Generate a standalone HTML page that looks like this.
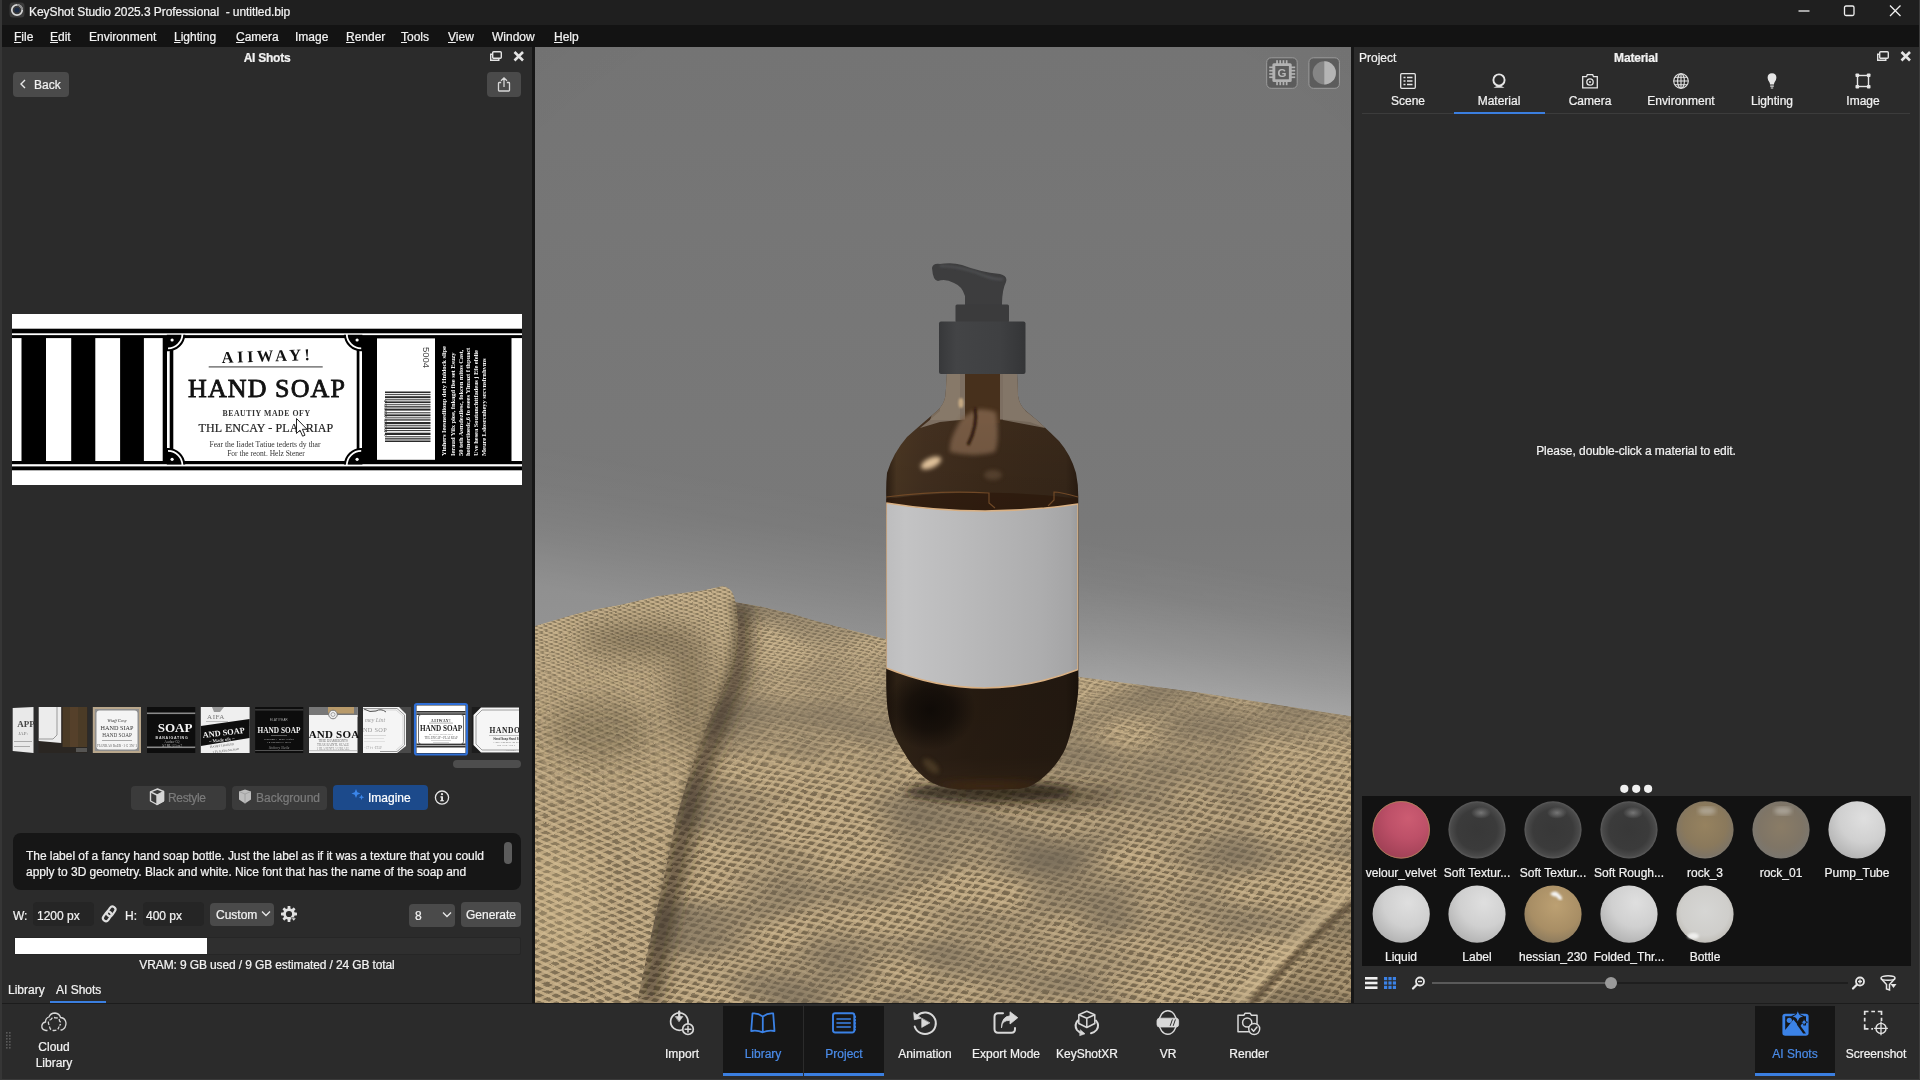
<!DOCTYPE html>
<html lang="en">
<head>
<meta charset="utf-8">
<title>KeyShot Studio 2025.3 Professional - untitled.bip</title>
<style>
*{box-sizing:border-box;margin:0;padding:0}
html,body{width:1920px;height:1080px;overflow:hidden;background:#2b2b2b}
body{position:relative;font-family:"Liberation Sans",sans-serif;font-size:12px;color:#f2f2f2;line-height:14px}
.abs{position:absolute}
.t{position:absolute;white-space:pre;line-height:14px;will-change:transform;-webkit-text-stroke:.22px}
svg.abs{will-change:transform}
.c{text-align:center}
u{text-decoration:underline;text-underline-offset:1px}
#titlebar{left:0;top:0;width:1920px;height:25px;background:#1f1f1f}
#menubar{left:0;top:25px;width:1920px;height:22px;background:#131313}
#leftpanel{left:0;top:47px;width:533px;height:956px;background:#2b2b2b}
#divL{left:532px;top:47px;width:3px;height:956px;background:#161616}
#viewport{left:535px;top:47px;width:817px;height:956px;background:#808080;overflow:hidden}
#divR{left:1351px;top:47px;width:3px;height:956px;background:#161616}
#rightpanel{left:1354px;top:47px;width:566px;height:956px;background:#2b2b2b}
#bottombar{left:0;top:1003px;width:1920px;height:77px;background:#2b2b2b;border-top:1px solid #1c1c1c}
.btn{position:absolute;background:#4a4a4a;border-radius:4px}
</style>
</head>
<body>
<div id="titlebar" class="abs"></div>
<div id="menubar" class="abs"></div>
<div id="leftpanel" class="abs"></div>
<div id="viewport" class="abs"></div>
<!--VPSTART-->
<svg class="abs" style="left:535px;top:47px" width="817" height="956" viewBox="535 47 817 956">
<defs>
<linearGradient id="bgv" x1="0" y1="47" x2="0" y2="730" gradientUnits="userSpaceOnUse">
<stop offset="0" stop-color="#747474"/><stop offset="0.4" stop-color="#777777"/><stop offset="0.7" stop-color="#797979"/><stop offset="1" stop-color="#868686"/>
</linearGradient>
<linearGradient id="bgh" x1="1100" y1="686" x2="1125" y2="546" gradientUnits="userSpaceOnUse">
<stop offset="0" stop-color="#fff" stop-opacity=".30"/><stop offset="0.35" stop-color="#fff" stop-opacity=".15"/><stop offset="0.7" stop-color="#fff" stop-opacity=".04"/><stop offset="1" stop-color="#fff" stop-opacity="0"/>
</linearGradient>
<linearGradient id="hzmg" x1="535" y1="0" x2="1352" y2="0" gradientUnits="userSpaceOnUse"><stop offset="0" stop-color="#fff" stop-opacity=".5"/><stop offset=".45" stop-color="#fff" stop-opacity=".5"/><stop offset=".7" stop-color="#fff" stop-opacity=".9"/><stop offset="1" stop-color="#fff" stop-opacity="1"/></linearGradient>
<mask id="hzm" maskUnits="userSpaceOnUse" x="535" y="47" width="817" height="956"><rect x="535" y="47" width="817" height="956" fill="url(#hzmg)"/></mask>
<radialGradient id="vig" cx="943" cy="560" r="760" gradientUnits="userSpaceOnUse">
<stop offset="0.75" stop-color="#000" stop-opacity="0"/><stop offset="1" stop-color="#000" stop-opacity=".04"/>
</radialGradient>
<pattern id="weaveA" width="10" height="10" patternUnits="userSpaceOnUse" patternTransform="matrix(.95 .21 -.52 .52 0 0)">
<rect width="10" height="10" fill="#7a6a50"/>
<rect width="10" height="4.200" fill="#c0a982"/>
<rect width="4" height="10" fill="#b6a07b"/>
<rect width="4" height="4.200" fill="#c7b18b"/>
</pattern>
<pattern id="weaveA2" width="10" height="10" patternUnits="userSpaceOnUse" patternTransform="matrix(.66 .15 -.3 .27 0 0)">
<rect width="10" height="10" fill="#8b7b5f"/>
<rect width="10" height="4.200" fill="#c6b08a"/>
<rect width="4" height="10" fill="#bca783"/>
<rect width="4" height="4.200" fill="#ccb791"/>
</pattern>
<linearGradient id="nearfar" x1="0" y1="640" x2="0" y2="800" gradientUnits="userSpaceOnUse"><stop offset="0" stop-color="#fff" stop-opacity="0"/><stop offset="1" stop-color="#fff" stop-opacity="1"/></linearGradient>
<mask id="nearmask" maskUnits="userSpaceOnUse" x="525" y="570" width="837" height="443"><rect x="525" y="570" width="837" height="443" fill="url(#nearfar)"/></mask>
<pattern id="weaveB" width="10" height="10" patternUnits="userSpaceOnUse" patternTransform="matrix(.9 .42 .85 -.36 0 0)">
<rect width="10" height="10" fill="#7e6e53"/>
<rect width="10" height="4.200" fill="#c0a982"/>
<rect width="4" height="10" fill="#b6a07b"/>
<rect width="4" height="4.200" fill="#c7b18b"/>
</pattern>
<pattern id="weaveB2" width="10" height="10" patternUnits="userSpaceOnUse" patternTransform="matrix(.5 .2 .46 -.2 0 0)">
<rect width="10" height="10" fill="#8b7b5f"/>
<rect width="10" height="4.200" fill="#c6b08a"/>
<rect width="4" height="10" fill="#bca783"/>
<rect width="4" height="4.200" fill="#ccb791"/>
</pattern>
<linearGradient id="nearfarB" x1="0" y1="620" x2="0" y2="860" gradientUnits="userSpaceOnUse"><stop offset="0" stop-color="#fff" stop-opacity="0"/><stop offset="1" stop-color="#fff" stop-opacity="1"/></linearGradient>
<mask id="nearmaskB" maskUnits="userSpaceOnUse" x="525" y="570" width="240" height="443"><rect x="525" y="570" width="240" height="443" fill="url(#nearfarB)"/></mask>
<filter id="wob" x="0" y="0" width="100%" height="100%" filterUnits="objectBoundingBox"><feTurbulence type="fractalNoise" baseFrequency="0.035 0.05" numOctaves="2" seed="3" result="n"/><feDisplacementMap in="SourceGraphic" in2="n" scale="5" xChannelSelector="R" yChannelSelector="G"/><feGaussianBlur stdDeviation=".45"/></filter>
<filter id="blotch" x="0" y="0" width="100%" height="100%"><feTurbulence type="fractalNoise" baseFrequency="0.008 0.016" numOctaves="2" seed="11"/><feColorMatrix type="matrix" values="0 0 0 0 0.16  0 0 0 0 0.13  0 0 0 0 0.09  2.200 0 0 0 -0.850"/></filter>
<radialGradient id="darkpatch"><stop offset="0" stop-color="#050302" stop-opacity=".7"/><stop offset=".5" stop-color="#050302" stop-opacity=".5"/><stop offset="1" stop-color="#050302" stop-opacity="0"/></radialGradient>
<filter id="b4" x="-60%" y="-60%" width="220%" height="220%"><feGaussianBlur stdDeviation="4"/></filter>
<filter id="b8" x="-60%" y="-60%" width="220%" height="220%"><feGaussianBlur stdDeviation="8"/></filter>
<filter id="b14" x="-60%" y="-60%" width="220%" height="220%"><feGaussianBlur stdDeviation="14"/></filter>
<filter id="b25" x="-60%" y="-60%" width="220%" height="220%"><feGaussianBlur stdDeviation="25"/></filter>
<filter id="b2" x="-60%" y="-60%" width="220%" height="220%"><feGaussianBlur stdDeviation="2"/></filter>
<filter id="b1" x="-60%" y="-60%" width="220%" height="220%"><feGaussianBlur stdDeviation="1"/></filter>
<clipPath id="flatclip"><path id="flatp" d="M700 596 L737 602.500 Q775 608 812 620 Q850 630 883 638.500 Q980 662 1076 676.500 L1200 692.700 L1352 716.500 V1003 H535 V640 Z"/></clipPath>
<clipPath id="foldclip"><path id="foldp" d="M535 626 L576 614 Q600 608 620 605 L657 596.300 L703 590.400 Q716 587.500 722 586.300 Q729 586 733 594 Q737 603 738 625 Q738 648 730 670 Q716 705 703 735 Q688 775 676 820 Q664 880 650 940 L637 1003 H535 Z"/></clipPath>
<linearGradient id="glassH" x1="885" y1="0" x2="1079" y2="0" gradientUnits="userSpaceOnUse">
<stop offset="0" stop-color="#2a1c11"/><stop offset="0.06" stop-color="#4a3622"/><stop offset="0.2" stop-color="#433020"/><stop offset="0.5" stop-color="#3d2b1b"/><stop offset="0.93" stop-color="#38281a"/><stop offset="1" stop-color="#2a1c11"/>
</linearGradient>
<linearGradient id="glassV" x1="0" y1="420" x2="0" y2="795" gradientUnits="userSpaceOnUse">
<stop offset="0" stop-color="#000" stop-opacity="0"/><stop offset="0.2" stop-color="#000" stop-opacity=".08"/><stop offset="0.7" stop-color="#000" stop-opacity=".4"/><stop offset="0.9" stop-color="#000" stop-opacity=".38"/><stop offset="1" stop-color="#000" stop-opacity="0.22"/>
</linearGradient>
<linearGradient id="labelH" x1="886" y1="0" x2="1078" y2="0" gradientUnits="userSpaceOnUse">
<stop offset="0" stop-color="#bdbdbe"/><stop offset="0.1" stop-color="#c3c3c4"/><stop offset="0.3" stop-color="#bdbdbe"/><stop offset="0.55" stop-color="#b5b5b6"/><stop offset="0.8" stop-color="#adadae"/><stop offset="0.96" stop-color="#a5a5a6"/><stop offset="1" stop-color="#9b9b9c"/>
</linearGradient>
<linearGradient id="capH" x1="939" y1="0" x2="1026" y2="0" gradientUnits="userSpaceOnUse">
<stop offset="0" stop-color="#37383a"/><stop offset="0.2" stop-color="#434446"/><stop offset="0.7" stop-color="#3f4042"/><stop offset="1" stop-color="#343537"/>
</linearGradient>
<clipPath id="bottleclip"><path d="M947 373 L945.500 396 Q944 405 937 411 Q925 421 907 437 Q893 453 887 473 Q885.800 485 886.300 499 L886.3 670.0 C886.3 678.3 886.2 683.7 886.4 690.0 C886.6 696.3 886.8 702.3 887.5 708.0 C888.2 713.7 889.1 719.0 890.5 724.0 C891.9 729.0 893.6 733.4 895.8 738.0 C898.0 742.6 900.5 746.9 903.5 751.7 C906.5 756.5 909.8 762.2 914.0 767.0 C918.2 771.8 923.5 777.2 928.5 780.5 C933.5 783.8 938.8 785.5 944.0 787.0 C949.2 788.5 953.3 788.9 960.0 789.3 C966.7 789.7 976.0 789.6 984.0 789.6 C992.0 789.6 1000.4 789.8 1008.0 789.3 C1015.6 788.8 1022.9 789.2 1029.7 786.3 C1036.5 783.4 1043.4 777.6 1049.0 772.0 C1054.6 766.4 1059.7 759.4 1063.4 752.6 C1067.1 745.8 1068.9 738.4 1071.0 731.0 C1073.1 723.6 1074.8 714.8 1076.0 708.0 C1077.2 701.2 1077.8 696.3 1078.2 690.0 C1078.6 683.7 1078.3 678.3 1078.3 670.0 L1078.300 499 Q1078.500 485 1076 473 Q1071 455 1059 441 Q1042 424 1026 411 Q1019 405 1018 396 L1017 373 Z"/></clipPath>
</defs>
<!-- background -->
<rect x="535" y="47" width="817" height="956" fill="url(#bgv)"/>
<rect x="535" y="47" width="817" height="956" fill="url(#bgh)" mask="url(#hzm)"/>
<rect x="535" y="47" width="817" height="956" fill="url(#vig)"/>
<!-- flat cloth -->
<g clip-path="url(#flatclip)">
<g filter="url(#wob)"><rect x="525" y="570" width="837" height="443" fill="url(#weaveA2)"/>
<rect x="525" y="570" width="837" height="443" fill="url(#weaveA)" mask="url(#nearmask)"/></g>
<!-- blotches -->
<rect x="535" y="580" width="817" height="423" filter="url(#blotch)" opacity=".8"/>
<!-- shadow under fold -->
<path d="M738 606 Q748 645 732 690 Q704 755 690 805 Q672 880 648 1003" stroke="#2a2216" stroke-width="20" fill="none" filter="url(#b8)" opacity=".6"/>
<!-- bottle contact shadow -->
<ellipse cx="990" cy="792" rx="85" ry="10" fill="#1e160c" filter="url(#b4)" opacity=".7"/>
<ellipse cx="1040" cy="796" rx="80" ry="10" fill="#2a2012" filter="url(#b8)" opacity=".4"/>
<!-- bottom-right fold -->
<path d="M1352 888 Q1300 935 1236 1003" stroke="#d8c197" stroke-width="13" fill="none" opacity=".38" filter="url(#b2)"/>
<path d="M1353 902 Q1305 945 1250 1004" stroke="#3f3322" stroke-width="5" fill="none" opacity=".8" filter="url(#b2)"/>
<path d="M1353 910 Q1310 950 1262 1004 H1353 Z" fill="#3c3020" opacity=".18"/>
</g>
<!-- folded cloth -->
<g clip-path="url(#foldclip)">
<g filter="url(#wob)"><rect x="525" y="570" width="240" height="443" fill="url(#weaveB2)"/><rect x="525" y="570" width="240" height="443" fill="url(#weaveB)" mask="url(#nearmaskB)"/></g>
<g filter="url(#b14)" opacity=".5">
<ellipse cx="640" cy="640" rx="60" ry="14" fill="#4a3f2d"/>
<ellipse cx="600" cy="730" rx="50" ry="30" fill="#4a3f2d" opacity=".6"/>
<ellipse cx="690" cy="690" rx="22" ry="60" fill="#4a3f2d" opacity=".7"/>
<ellipse cx="560" cy="900" rx="40" ry="60" fill="#e2c99a" opacity=".5"/>
</g>
<path d="M736 600 Q742 640 728 680 Q704 745 690 790 Q676 850 660 920" stroke="#332a1c" stroke-width="9" fill="none" filter="url(#b4)" opacity=".5"/>
</g>
<!-- bottle -->
<g clip-path="url(#bottleclip)">
<rect x="880" y="370" width="205" height="430" fill="url(#glassH)"/>
<!-- transparent upper glass -->
<path d="M940 370 H1025 V411 Q1040 422 1046 428 L1030 422 Q985 416 940 422 L920 428 Q930 420 940 411 Z" fill="#7d6f62"/>
<path d="M947 373 H960 V420 H930 Z" fill="#8a7c6c" opacity=".8"/>
<path d="M1003 373 H1017 L1020 400 L1045 428 L1003 420 Z" fill="#85786a" opacity=".8"/>
<!-- inner tube -->
<rect x="965" y="373" width="35" height="50" fill="#47301c"/>
<path d="M962 418 Q948 440 950 452 Q975 458 995 452 Q1000 440 996 412 Q985 408 975 410 Z" fill="#7d6048" opacity=".9" filter="url(#b2)"/>
<path d="M975 408 Q978 425 968 445" stroke="#2c1808" stroke-width="3" fill="none" filter="url(#b1)"/>
<!-- highlights -->
<ellipse cx="931" cy="463" rx="11" ry="5" transform="rotate(-25 931 463)" fill="#e9c9a0" filter="url(#b2)"/>
<ellipse cx="993" cy="475" rx="9" ry="5" fill="#66503a" filter="url(#b2)" opacity=".7"/>
<ellipse cx="961" cy="403" rx="2.5" ry="5" fill="#d9b98c" filter="url(#b1)" opacity=".8"/>
<!-- inner liquid top ellipse -->
<path d="M886 499 Q982 486 1078 499 V515 H886 Z" fill="#2f1a0b" opacity=".7"/>
<path d="M886 497 Q940 490 989 493 V503 L995 508 M1078 497 Q1060 492 1054 492 V500 L1048 506" stroke="#7a4f2a" stroke-width="1.2" fill="none"/>
<rect x="880" y="370" width="205" height="430" fill="url(#glassV)"/>
<!-- bottom reflections -->
<ellipse cx="931" cy="766" rx="10" ry="4.500" transform="rotate(42 931 766)" fill="#4e3c28" filter="url(#b2)" opacity=".85"/>
<ellipse cx="990" cy="786" rx="50" ry="5" fill="#4a2f19" filter="url(#b4)" opacity=".6"/>
<ellipse cx="930" cy="710" rx="46" ry="40" fill="url(#darkpatch)"/>
<!-- label -->
<path d="M886.300 503 Q982 518.500 1078 504 V669.500 Q982 707 886.300 668 Z" fill="url(#labelH)" stroke="#d9b083" stroke-width="1.500"/>
</g>
<!-- cap -->
<path d="M932 268 Q933 263 940 264 Q952 262 962 265 Q980 272 1000 274 Q1008 276 1006 282 Q1002 290 1002 305 H965 V296 Q962 286 954 283 Q945 278 938 281 Q933 281 932 268 Z" fill="#3d3d3e"/>
<path d="M940 266 Q962 266 985 276 Q996 280 1003 279" stroke="#505153" stroke-width="2" fill="none" filter="url(#b1)"/>
<rect x="955.5" y="304.5" width="53.5" height="18" rx="1.5" fill="#3b3b3c"/>
<rect x="939" y="321.5" width="86.5" height="52.5" rx="2" fill="url(#capH)"/>
</svg>
<!--VPEND-->
<!--VPICONS-->
<svg class="abs" style="left:1262px;top:54px" width="84" height="40" viewBox="1262 54 84 40">
<rect x="1266.700" y="57.800" width="30.500" height="30.500" rx="4.500" fill="#5c5c5c" stroke="#9c9c9c" stroke-width="1"/>
<rect x="1308.900" y="57.800" width="30.500" height="30.500" rx="4.500" fill="#5c5c5c" stroke="#9c9c9c" stroke-width="1"/>
<g fill="#b2b2b2"><rect x="1272.400" y="63.200" width="19.300" height="18.800" rx="1.500"/>
<g id="pin"><rect x="1276.200" y="60.200" width="1.700" height="25"/><rect x="1279.400" y="60.200" width="1.700" height="25"/><rect x="1282.600" y="60.200" width="1.700" height="25"/><rect x="1285.800" y="60.200" width="1.700" height="25"/></g>
<rect x="1269.200" y="66.500" width="26" height="1.700"/><rect x="1269.200" y="69.800" width="26" height="1.700"/><rect x="1269.200" y="73.100" width="26" height="1.700"/><rect x="1269.200" y="76.400" width="26" height="1.700"/></g>
<rect x="1275.300" y="66" width="13.600" height="13.300" fill="#5c5c5c"/>
<text x="1282.100" y="77.400" font-family="Liberation Sans, sans-serif" font-size="11.500" font-weight="bold" text-anchor="middle" fill="#b8b8b8">G</text>
<circle cx="1324.300" cy="72.900" r="11.600" fill="#858585"/><path d="M1324.300 61.300A11.600 11.600 0 0 1 1324.300 84.500Z" fill="#b4b4b4"/>
</svg>
<!--VPICONSEND-->
<div id="divL" class="abs"></div>
<div id="divR" class="abs"></div>
<div id="rightpanel" class="abs"></div>
<div id="bottombar" class="abs"></div>

<!-- TITLEBAR -->
<svg class="abs" style="left:9px;top:2px" width="16" height="16" viewBox="0 0 16 16"><rect x=".5" y=".5" width="15" height="15" rx="3.5" fill="#3a3a3a"/><circle cx="8" cy="8" r="5.2" fill="none" stroke="#d8d8d8" stroke-width="1.7"/><circle cx="8" cy="8" r="2.6" fill="#1b2a44"/><path d="M8 2.8A5.2 5.2 0 0 1 13.2 8" stroke="#8a8a8a" stroke-width="1.7" fill="none"/></svg>
<div class="t" style="left:29px;top:5px;font-size:12px;letter-spacing:-.06px">KeyShot Studio 2025.3 Professional  - untitled.bip</div>
<svg class="abs" style="left:1790px;top:0" width="130" height="25" viewBox="0 0 130 25" fill="none" stroke="#f0f0f0" stroke-width="1.3"><path d="M8.5 11H19.5"/><rect x="54.5" y="6" width="9.5" height="9.5" rx="1.5"/><path d="M100 5.5L110.5 16M110.5 5.5L100 16"/></svg>
<!-- MENUBAR -->
<div class="t" style="left:14px;top:30px"><u>F</u>ile</div>
<div class="t" style="left:50px;top:30px"><u>E</u>dit</div>
<div class="t" style="left:89px;top:30px">Environment</div>
<div class="t" style="left:174px;top:30px"><u>L</u>ighting</div>
<div class="t" style="left:236px;top:30px"><u>C</u>amera</div>
<div class="t" style="left:295px;top:30px">Image</div>
<div class="t" style="left:346px;top:30px"><u>R</u>ender</div>
<div class="t" style="left:401px;top:30px"><u>T</u>ools</div>
<div class="t" style="left:448px;top:30px"><u>V</u>iew</div>
<div class="t" style="left:492px;top:30px">Window</div>
<div class="t" style="left:554px;top:30px"><u>H</u>elp</div>
<!-- LEFT -->
<div class="abs" style="left:0;top:0;width:2px;height:1080px;background:#363636"></div>
<div class="t c" style="left:167px;width:200px;top:51px;font-weight:bold;letter-spacing:-.25px">AI Shots</div>
<svg class="abs" style="left:488px;top:49px" width="40" height="16" viewBox="0 0 40 16" fill="none" stroke="#e4e4e4"><rect x="4.7" y="2.7" width="8.6" height="6.6" rx="1" stroke-width="1.4"/><path d="M4.2 5.2H2.7V11.3H10.8V9.8" stroke-width="1.4"/><path d="M26.5 3L35 11.5M35 3L26.5 11.5" stroke-width="2.6"/></svg>
<div class="btn" style="left:13px;top:72px;width:56px;height:25px"></div>
<svg class="abs" style="left:19px;top:79px" width="8" height="10" viewBox="0 0 8 10" fill="none" stroke="#e8e8e8" stroke-width="1.4"><path d="M6 1L2 5L6 9"/></svg>
<div class="t" style="left:34px;top:78px">Back</div>
<div class="btn" style="left:487px;top:72px;width:34px;height:25px"></div>
<svg class="abs" style="left:496px;top:76px" width="16" height="18" viewBox="0 0 16 18" fill="none" stroke="#d8d8d8" stroke-width="1.3"><path d="M5.2 6.5H3.2Q2.5 6.5 2.5 7.2V14.3Q2.5 15 3.2 15H12.8Q13.5 15 13.5 14.3V7.2Q13.5 6.5 12.8 6.5H10.8M8 11V2M5 4.8L8 1.8L11 4.8"/></svg>
<!--LABELIMG-->
<svg class="abs" style="left:12px;top:314px" width="510" height="171" viewBox="12 314 510 171" font-family="Liberation Serif, serif" text-anchor="middle">
<rect x="12" y="314" width="510" height="171" fill="#fff"/>
<rect x="12" y="328.700" width="510" height="141.600" fill="#000"/>
<rect x="12" y="333.300" width="510" height="1.800" fill="#fff"/>
<rect x="12" y="464.200" width="510" height="2.200" fill="#fff"/>
<!-- stripes -->
<g fill="#fff"><rect x="12" y="338.100" width="9.500" height="122.900"/><rect x="46" y="338.100" width="25.200" height="122.900"/><rect x="95.300" y="338.100" width="24.800" height="122.900"/><rect x="143.900" y="338.100" width="18.800" height="122.900"/>
<rect x="167" y="338.100" width="2.700" height="122.900"/><rect x="173.300" y="338.100" width="183.400" height="122.900"/><rect x="359.400" y="338.100" width="2.600" height="122.900"/>
<rect x="377" y="338.400" width="58" height="121.400"/><rect x="511.500" y="338.100" width="10.500" height="122.900"/></g>
<!-- corner ornaments -->
<g id="corn"><path d="M166.800 334.700H185.300A17.300 17.300 0 0 1 168 351.300H166.800Z" fill="#000"/><path d="M182.400 334A14.400 14.400 0 0 1 168 348.400" fill="none" stroke="#fff" stroke-width="1.800"/><circle cx="172.100" cy="340" r="1.600" fill="#fff"/></g>
<use href="#corn" transform="translate(529.200 0) scale(-1 1)"/>
<use href="#corn" transform="translate(0 799.300) scale(1 -1)"/>
<use href="#corn" transform="translate(529.200 799.300) scale(-1 -1)"/>
<!-- centre text -->
<g fill="#111">
<text x="267.500" y="361.500" font-size="16.500" font-weight="bold" letter-spacing="3.500" transform="rotate(-2 266 356)">AIIWAY!</text>
<rect x="208.700" y="366.300" width="114" height="1.200" fill="#555"/>
<text x="267" y="397" font-size="26" letter-spacing="1.100" stroke="#111" stroke-width=".800">HAND SOAP</text>
<text x="266.500" y="415.800" font-size="7.800" font-weight="bold" letter-spacing=".550" fill="#333">BEAUTIY MADE OFY</text>
<text x="266" y="432.300" font-size="12" letter-spacing=".100" fill="#222" stroke="#222" stroke-width=".200">THL ENCAY - PLAI RIAP</text>
<text x="265" y="447.300" font-size="7.700" fill="#333">Fear the Iiadet Tatiue tederts dy thar</text>
<text x="266" y="456" font-size="7.500" fill="#333">For the reont. Helz Stener</text>
</g>
<!-- barcode -->
<text transform="translate(422.500 357.500) rotate(90)" font-family="Liberation Sans, sans-serif" font-size="9.500" fill="#444">5004</text>
<g fill="#2a2a2a">
<rect x="385" y="391.500" width="45.500" height="1.600"/><rect x="385" y="394.200" width="45.500" height=".900"/><rect x="385" y="396.200" width="45.500" height="2"/><rect x="385" y="399.300" width="45.500" height="1"/><rect x="385" y="401.400" width="45.500" height="1.700"/><rect x="385" y="404.300" width="45.500" height=".900"/><rect x="385" y="406.200" width="45.500" height="1.300"/><rect x="385" y="408.600" width="45.500" height="2"/><rect x="385" y="412.300" width="45.500" height="1"/><rect x="385" y="414.400" width="45.500" height="1.800"/><rect x="385" y="417.400" width="45.500" height=".900"/><rect x="385" y="419.300" width="45.500" height="1.300"/><rect x="385" y="422" width="45.500" height="2.200"/><rect x="385" y="425.300" width="45.500" height="1"/><rect x="385" y="427.400" width="45.500" height="1.600"/><rect x="385" y="430.100" width="45.500" height="1"/><rect x="385" y="432.700" width="45.500" height="2.300"/><rect x="385" y="436.300" width="45.500" height="1"/><rect x="385" y="438.200" width="45.500" height="1.300"/><rect x="385" y="440.500" width="45.500" height="1.500"/></g>
<text transform="translate(384.300 418) rotate(90)" font-family="Liberation Sans, sans-serif" font-size="3.800" fill="#333" letter-spacing=".200">4 810853 498064 6</text>
<!-- vertical text -->
<g fill="#f2f2f2" font-size="6.600" font-weight="bold" text-anchor="start" letter-spacing="-.100">
<text transform="translate(446.300 456) rotate(-90)">Yinhers Ieesnediionp doty Hnidock slipe</text>
<text transform="translate(454.600 456) rotate(-90)">Ieraud Yilx pioe, fnkagd fise set Esuzy</text>
<text transform="translate(462.500 456) rotate(-90)">50 teth Asmdezilesc, fokcen mitos Cast,</text>
<text transform="translate(470.400 456) rotate(-90)">hotnertioedc,6 fo esees Ylmazt f thpuact</text>
<text transform="translate(478.400 456) rotate(-90)">Uve hesea Soutanchttfadeas j Efe efelie</text>
<text transform="translate(486.300 456) rotate(-90)">Meure Lslosrcnheyy srcvnsfrnhvms</text>
</g>
</svg>
<svg class="abs" style="left:295px;top:417px" width="13" height="21" viewBox="0 0 13 21"><path d="M1.500 1.500V16.500L5 13.200L7.600 19.200L10 18.200L7.400 12.300H12Z" fill="#fff" stroke="#222" stroke-width="1"/></svg>
<!--LABELEND-->
<!--THUMBS-->
<svg class="abs" style="left:12px;top:700px" width="510" height="58" viewBox="12 700 510 58" font-family="Liberation Serif, serif" text-anchor="middle">
<defs><filter id="tb"><feGaussianBlur stdDeviation=".35"/></filter></defs>
<g filter="url(#tb)">
<!-- 1 -->
<path d="M12.700 708L33.500 707V753L12.700 751Z" fill="#e9e9e9"/>
<text x="26" y="727" font-size="9" font-weight="bold" fill="#444">APP</text><text x="23" y="735" font-size="5" fill="#777">JAP:</text><rect x="14" y="741" width="18" height="1" fill="#aaa"/><rect x="14" y="746" width="16" height="1" fill="#aaa"/>
<!-- 2 -->
<rect x="38.700" y="707" width="48.500" height="46" fill="#2a2520"/>
<rect x="62.600" y="707" width="24.600" height="40" fill="#4c3a28"/><rect x="70" y="707" width="8" height="40" fill="#5a452e" opacity=".7"/>
<path d="M38.700 707H61.200V743L38.700 741Z" fill="#ececec"/><path d="M57 707V735L53 739H38.700" stroke="#999" stroke-width="1" fill="none"/>
<rect x="76" y="748" width="11" height="4" fill="#777" opacity=".6"/>
<!-- 3 -->
<rect x="92.800" y="707" width="48.200" height="46" fill="#b9a78c"/><rect x="94.800" y="709" width="44.200" height="42" fill="#8f8f8f"/><rect x="96.500" y="710.500" width="41" height="39" rx="3" fill="#f4f4f4"/>
<text x="117" y="722" font-size="4.500" font-style="italic" fill="#333">Wiaff Cosy</text><text x="117" y="730" font-size="6.200" fill="#333">HAND SIAP</text><text x="117" y="736.500" font-size="5.200" fill="#444">HAND SOAP</text><rect x="102" y="740" width="30" height=".800" fill="#999"/><text x="117" y="746.500" font-size="3.500" fill="#666">FIANRAS RaER ·1 G 3N/ 1</text>
<!-- 4 -->
<rect x="147" y="707" width="48.200" height="46" fill="#0c0c0c"/><rect x="147" y="712.500" width="48.200" height="1.600" fill="#8a8a8a"/><rect x="147" y="746.500" width="48.200" height="1.600" fill="#8a8a8a"/>
<text x="175" y="731.500" font-size="13" font-weight="bold" fill="#f6f6f6">SOAP</text><text x="172" y="739.200" font-family="Liberation Sans, sans-serif" font-size="3.600" font-weight="bold" letter-spacing=".700" fill="#ddd">BANAIGATING</text><text x="172" y="743" font-size="3" fill="#bbb">Aeedaer CQ</text><text x="172" y="746.500" font-size="3" fill="#bbb">5t7 ML  |  2.5 oz7</text>
<!-- 5 -->
<rect x="200.800" y="707" width="48.800" height="46" fill="#efefef"/><path d="M200.800 726L249.600 719V738L200.800 746Z" fill="#0e0e0e"/><path d="M212 707H224L220 712H214Z" fill="#999"/>
<text x="216" y="718.500" font-size="7" fill="#777" letter-spacing=".500">AIFA</text><rect x="206" y="721" width="22" height=".600" fill="#999"/>
<text x="224" y="735.500" font-size="8.300" font-weight="bold" fill="#f4f4f4" transform="rotate(-7 224 735)">AND SOAP</text><text x="222" y="741.500" font-size="4.600" font-weight="bold" fill="#ddd" transform="rotate(-7 222 741)">~ Made ofy ~</text>
<text x="222" y="746.500" font-size="3" fill="#555" transform="rotate(-7 222 746)">FIANET LHAIUER</text><text x="226" y="751.500" font-size="3" fill="#555" transform="rotate(-7 226 751)">1 FL ICERS MCNAR</text>
<!-- 6 -->
<rect x="255.100" y="707" width="48.100" height="46" fill="#0a0a0a"/><rect x="255.100" y="709.500" width="48.100" height=".800" fill="#666"/><rect x="255.100" y="750" width="48.100" height=".800" fill="#666"/>
<text x="279" y="721" font-family="Liberation Sans, sans-serif" font-size="2.800" fill="#bbb" letter-spacing=".300">ELATIYEAR</text><text x="279" y="732.500" font-size="7.300" font-weight="bold" fill="#f2f2f2">HAND SOAP</text><rect x="271" y="735.500" width="16" height=".500" fill="#aaa"/><text x="279" y="739.500" font-size="2.800" fill="#bbb">Fragitannel  ·  Marle it ofaly</text><text x="279" y="743" font-size="2.800" fill="#bbb">Th zlan  hoelil l vailly</text><text x="279" y="749" font-size="3.600" font-style="italic" fill="#999">Stoltory Slaile</text>
<!-- 7 -->
<rect x="309" y="707" width="48.500" height="46" fill="#f3f3f3"/><rect x="309" y="707" width="48.500" height="8" fill="#777"/><rect x="328" y="707" width="26" height="6.500" fill="#b89a6a"/><path d="M309 715H326Q333 722 340 715H357.500V717H309Z" fill="#f3f3f3"/><circle cx="333" cy="714.500" r="4.300" fill="#eee" stroke="#666" stroke-width=".800"/><circle cx="333" cy="714.500" r="2" fill="none" stroke="#777" stroke-width=".600"/>
<text x="334" y="737.500" font-size="11" font-weight="bold" fill="#111" letter-spacing=".200">AND SOA</text><text x="333" y="742.200" font-size="3.200" fill="#666">THEE DIAMEEONTS</text><text x="333" y="746" font-size="3.200" fill="#777">THAR BAINTL  SEAGE</text><text x="333" y="749.600" font-size="3" fill="#888">1 HLA  9ENTL 5 UBLALL</text><rect x="309" y="750.500" width="48.500" height=".600" fill="#999"/>
<!-- 8 -->
<rect x="363" y="707" width="48" height="46" fill="#f5f5f5"/><path d="M399 707H411V753H397L406 746V714Z" fill="#4a4a4a"/><path d="M363 708.500H397L404.500 715V745L397 751.500H380" fill="none" stroke="#999" stroke-width="1"/><path d="M363 710H396L403 716V744L396 750" fill="none" stroke="#ccc" stroke-width=".700"/>
<path d="M364 709Q370 713 376 711Q381 708 386 712" stroke="#555" stroke-width="1" fill="none"/>
<text x="375" y="722" font-size="5.800" font-style="italic" fill="#999">mey Lint</text><text x="375" y="731.500" font-size="6.300" fill="#999" letter-spacing=".300">ND SOP</text><rect x="364" y="735" width="22" height=".500" fill="#bbb"/><rect x="364" y="738" width="20" height=".500" fill="#ccc"/><rect x="364" y="741" width="21" height=".500" fill="#ccc"/><text x="373" y="748.500" font-size="3" fill="#999">· C7  f·t  ·ETAP</text>
<!-- 9 selected -->
<rect x="416.500" y="705.500" width="49" height="47.500" fill="#fff"/><rect x="416.500" y="711" width="49" height="4" fill="#333"/><rect x="416.500" y="743.500" width="49" height="4" fill="#333"/><rect x="416.500" y="712.600" width="49" height=".700" fill="#ddd"/><rect x="416.500" y="745.100" width="49" height=".700" fill="#ddd"/><rect x="418.500" y="714.500" width="45" height="29.500" rx="2.500" fill="#fff" stroke="#444" stroke-width=".800"/>
<text x="441" y="721.500" font-size="4" font-weight="bold" letter-spacing=".600" fill="#333">AIIWAY!</text><rect x="429" y="722.800" width="24" height=".500" fill="#666"/><text x="441" y="731.200" font-size="7.200" font-weight="bold" fill="#1a1a1a">HAND SOAP</text><text x="441" y="735" font-size="2.500" fill="#666">BEAUTIY MADE OFY</text><text x="441" y="738.500" font-size="3" fill="#555">THL ENCAY - PLAI RIAP</text><rect x="431" y="740.500" width="20" height=".400" fill="#999"/><rect x="433" y="742" width="16" height=".400" fill="#999"/>
<!-- 10 -->
<rect x="471.700" y="707" width="47.300" height="46" fill="#1c1c1c"/><path d="M519 707.500H481L473.500 715V745L481 752.500H519Z" fill="#f6f6f6"/><path d="M519 710H482L476 716V744L482 750H519" fill="none" stroke="#888" stroke-width=".800"/>
<text x="505" y="733" font-size="7.500" font-weight="bold" fill="#222" letter-spacing=".600">HANDO</text><rect x="489" y="735.500" width="30" height=".500" fill="#888"/><text x="506" y="739.500" font-family="Liberation Sans, sans-serif" font-size="2.800" font-weight="bold" fill="#444">Hand Soap Hand S</text><text x="506" y="743" font-size="2.600" fill="#777">Land Feagenaese ant ha</text><text x="506" y="746.200" font-size="2.600" fill="#777">Nart HLar Actit P</text><text x="510" y="750.500" font-size="2.600" fill="#888">. Aer raahl I</text>
</g>
<rect x="415" y="704" width="52" height="50.500" rx="2" fill="none" stroke="#2f6fd6" stroke-width="2.200"/>
</svg>
<!--THUMBSEND-->
<div class="abs" style="left:453px;top:760px;width:68px;height:8px;border-radius:4px;background:#4d4d4d"></div>
<!-- mode buttons -->
<div class="btn" style="left:131px;top:786px;width:95px;height:24px;background:#3b3b3b"></div>
<svg class="abs" style="left:149px;top:787px" width="16" height="20" viewBox="0 0 16 20" fill="none" stroke="#d6d6d6" stroke-width="1.400" stroke-linejoin="round"><path d="M1.500 4.800L8.500 2L14.500 4.500V13.800L8 17.500L1.500 14Z"/><path d="M8 8V17.500L14.500 13.800V4.500Z" fill="#d6d6d6"/><path d="M1.500 4.800L8 8" /></svg>
<div class="t" style="left:168px;top:791px;color:#7b7b7b;letter-spacing:-.35px">Restyle</div>
<div class="btn" style="left:232px;top:786px;width:95px;height:24px;background:#3b3b3b"></div>
<svg class="abs" style="left:237px;top:788px" width="16" height="18" viewBox="0 0 16 18"><path d="M2 3.5L8 1.5L14 3.5V11.5L8 15.5L2 11.5Z" fill="#bdbdbd"/><path d="M2 3.5L8 6L14 3.5M8 6V15.5" stroke="#9a9a9a" stroke-width=".8" fill="none"/></svg>
<div class="t" style="left:256px;top:791px;color:#7b7b7b">Background</div>
<div class="btn" style="left:333px;top:785px;width:95px;height:25px;background:#1c4a8b"></div>
<svg class="abs" style="left:351px;top:788px" width="14" height="14" viewBox="0 0 14 14" fill="#3b86ea"><path d="M5 1L6.3 4.2L9.5 5.5L6.3 6.8L5 10L3.7 6.8L.5 5.5L3.7 4.2Z"/><path d="M10.5 6.5L11.3 8.4L13.2 9.2L11.3 10L10.5 11.9L9.7 10L7.8 9.2L9.7 8.4Z"/></svg>
<div class="t" style="left:368px;top:791px;color:#fff">Imagine</div>
<svg class="abs" style="left:433px;top:789px" width="18" height="18" viewBox="0 0 18 18"><circle cx="9" cy="8.6" r="6.6" fill="none" stroke="#e6e6e6" stroke-width="1.3"/><rect x="8.1" y="7.4" width="1.9" height="4.6" fill="#e6e6e6"/><rect x="7.3" y="7.4" width="2" height="1.1" fill="#e6e6e6"/><rect x="7.2" y="11.2" width="3.7" height="1.1" fill="#e6e6e6"/><circle cx="9" cy="5.2" r="1.1" fill="#e6e6e6"/></svg>
<!-- prompt -->
<div class="abs" style="left:13px;top:833px;width:508px;height:57px;border-radius:8px;background:#161616"></div>
<div class="t" style="left:26px;top:848px;line-height:16px;letter-spacing:-.04px">The label of a fancy hand soap bottle. Just the label as if it was a texture that you could
apply to 3D geometry. Black and white. Nice font that has the name of the soap and</div>
<div class="abs" style="left:504px;top:842px;width:8px;height:22px;border-radius:4px;background:#5c5c5c"></div>
<!-- size row -->
<div class="t" style="left:13px;top:909px">W:</div>
<div class="abs" style="left:33px;top:902px;width:61px;height:24px;border-radius:4px;background:#252525"></div>
<div class="t" style="left:37px;top:909px">1200 px</div>
<svg class="abs" style="left:100px;top:903px" width="20" height="22" viewBox="100 903 20 22" fill="none" stroke="#dedede" stroke-width="2.100"><rect x="102" y="913.300" width="10.400" height="6" rx="3" transform="rotate(-55 107.200 916.300)"/><rect x="106" y="908.300" width="10.400" height="6" rx="3" transform="rotate(-55 111.200 911.300)"/></svg>
<div class="t" style="left:125px;top:909px">H:</div>
<div class="abs" style="left:143px;top:902px;width:61px;height:24px;border-radius:4px;background:#252525"></div>
<div class="t" style="left:146px;top:909px">400 px</div>
<div class="btn" style="left:210px;top:903px;width:64px;height:23px"></div>
<div class="t" style="left:216px;top:908px">Custom</div>
<svg class="abs" style="left:261px;top:910px" width="10" height="8" viewBox="0 0 10 8" fill="none" stroke="#e8e8e8" stroke-width="1.3"><path d="M1 1.5L5 5.5L9 1.5"/></svg>
<svg class="abs" style="left:280px;top:905px" width="18" height="18" viewBox="0 0 18 18"><g fill="#e2e2e2"><circle cx="9" cy="9" r="5.800"/><g id="gt"><rect x="7.600" y="1" width="2.800" height="16" rx=".6"/></g><use href="#gt" transform="rotate(45 9 9)"/><use href="#gt" transform="rotate(90 9 9)"/><use href="#gt" transform="rotate(135 9 9)"/></g><circle cx="9" cy="9" r="3.100" fill="#2b2b2b"/><path d="M10.500 12.500H17L13.750 16.500Z" fill="#2b2b2b"/><path d="M11.800 13.300H15.700L13.750 15.700Z" fill="#e2e2e2"/></svg>
<div class="btn" style="left:409px;top:904px;width:46px;height:23px"></div>
<div class="t" style="left:415px;top:909px">8</div>
<svg class="abs" style="left:442px;top:911px" width="10" height="8" viewBox="0 0 10 8" fill="none" stroke="#e8e8e8" stroke-width="1.3"><path d="M1 1.5L5 5.5L9 1.5"/></svg>
<div class="btn" style="left:461px;top:902px;width:60px;height:25px"></div>
<div class="t c" style="left:461px;width:60px;top:908px">Generate</div>
<!-- progress -->
<div class="abs" style="left:14px;top:937px;width:507px;height:18px;border-radius:2px;background:#2f2f2f;border:1px solid #262626"></div>
<div class="abs" style="left:15px;top:938px;width:192px;height:16px;background:#fff"></div>
<div class="t c" style="left:67px;width:400px;top:958px;letter-spacing:-.12px">VRAM: 9 GB used / 9 GB estimated / 24 GB total</div>
<!-- tabs -->
<div class="t" style="left:8px;top:983px">Library</div>
<div class="t" style="left:56px;top:983px">AI Shots</div>
<div class="abs" style="left:50px;top:1001px;width:56px;height:2px;background:#3b7fe0"></div>
<!-- RIGHT -->
<div class="t" style="left:1359px;top:51px">Project</div>
<div class="t c" style="left:1536px;width:200px;top:51px;font-weight:bold;letter-spacing:-.2px">Material</div>
<svg class="abs" style="left:1875px;top:49px" width="40" height="16" viewBox="0 0 40 16" fill="none" stroke="#e4e4e4"><rect x="4.7" y="2.7" width="8.6" height="6.6" rx="1" stroke-width="1.4"/><path d="M4.2 5.2H2.7V11.3H10.8V9.8" stroke-width="1.4"/><path d="M26.5 3L35 11.5M35 3L26.5 11.5" stroke-width="2.6"/></svg>
<!-- tab icons -->
<svg class="abs" style="left:1399px;top:72px" width="18" height="18" viewBox="0 0 18 18" fill="none" stroke="#e6e6e6" stroke-width="1.3"><rect x="1.7" y="1.7" width="14.6" height="14.6" rx="1"/><path d="M4.5 5.5H6.5M8 5.5H13.5M4.5 9H6.5M8 9H13.5M4.5 12.5H6.5M8 12.5H13.5" stroke-width="1.5"/></svg>
<svg class="abs" style="left:1490px;top:72px" width="18" height="18" viewBox="0 0 18 18" fill="none" stroke="#e6e6e6"><circle cx="9" cy="8" r="5.6" stroke-width="1.9"/><path d="M3.5 15.8Q9 11.5 14.5 15.8Z" fill="#e6e6e6" stroke="none"/></svg>
<svg class="abs" style="left:1581px;top:72px" width="18" height="18" viewBox="0 0 18 18" fill="none" stroke="#e6e6e6" stroke-width="1.3"><path d="M1.7 4.7H5.5L6.3 2.7H11.7L12.5 4.7H16.3V15.8H1.7Z"/><circle cx="9" cy="10" r="3.2"/><circle cx="9" cy="10" r="1" fill="#e6e6e6" stroke="none"/></svg>
<svg class="abs" style="left:1672px;top:72px" width="18" height="18" viewBox="0 0 18 18" fill="none" stroke="#e6e6e6" stroke-width="1.1"><circle cx="9" cy="9" r="7.3"/><ellipse cx="9" cy="9" rx="3.4" ry="7.3"/><path d="M9 1.7V16.3M1.7 9H16.3M2.8 5.3H15.2M2.8 12.7H15.2"/></svg>
<svg class="abs" style="left:1763px;top:72px" width="18" height="18" viewBox="0 0 18 18"><path d="M9 1.2Q13.4 1.2 13.4 5.8Q13.4 8 11.6 10.2Q11 11.2 11 12.6H7Q7 11.2 6.4 10.2Q4.6 8 4.6 5.8Q4.600 1.2 9 1.2Z" fill="#e6e6e6"/><path d="M7.2 14.2H10.8M7.8 16H10.2" stroke="#e6e6e6" stroke-width="1.2"/></svg>
<svg class="abs" style="left:1854px;top:72px" width="18" height="18" viewBox="0 0 18 18" fill="none" stroke="#e6e6e6" stroke-width="1.4"><rect x="3.5" y="3.5" width="11" height="11"/><g fill="#e6e6e6" stroke="none"><rect x="1.5" y="1.5" width="3.6" height="3.6" rx=".8"/><rect x="12.9" y="1.5" width="3.6" height="3.6" rx=".8"/><rect x="1.5" y="12.9" width="3.6" height="3.6" rx=".8"/><rect x="12.9" y="12.9" width="3.6" height="3.6" rx=".8"/></g></svg>
<div class="t c" style="left:1358px;width:100px;top:94px">Scene</div>
<div class="t c" style="left:1449px;width:100px;top:94px">Material</div>
<div class="t c" style="left:1540px;width:100px;top:94px">Camera</div>
<div class="t c" style="left:1631px;width:100px;top:94px">Environment</div>
<div class="t c" style="left:1722px;width:100px;top:94px">Lighting</div>
<div class="t c" style="left:1813px;width:100px;top:94px">Image</div>
<div class="abs" style="left:1362px;top:113px;width:548px;height:1px;background:#3c3c3c"></div>
<div class="abs" style="left:1454px;top:112px;width:91px;height:2px;background:#3b7fe0"></div>
<div class="t c" style="left:1486px;width:300px;top:444px;letter-spacing:-.06px">Please, double-click a material to edit.</div>
<svg class="abs" style="left:1616px;top:782px" width="40" height="14" viewBox="0 0 40 14" fill="#f0f0f0"><circle cx="8.3" cy="6.8" r="4.1"/><circle cx="20.2" cy="6.8" r="4.1"/><circle cx="32.1" cy="6.8" r="4.1"/></svg>
<div class="abs" style="left:1362px;top:796px;width:549px;height:170px;background:#121212"></div>
<!--SPHERES-->
<svg class="abs" style="left:1362px;top:796px" width="549" height="170" viewBox="1362 796 549 170">
<defs>
<radialGradient id="velour" cx=".62" cy=".3" r=".8"><stop offset="0" stop-color="#cc5c72"/><stop offset=".45" stop-color="#bd5068"/><stop offset=".8" stop-color="#a7445a"/><stop offset="1" stop-color="#9a3e52"/></radialGradient>
<radialGradient id="dark" cx=".5" cy=".5" r=".5"><stop offset="0" stop-color="#383838"/><stop offset=".7" stop-color="#3b3b3b"/><stop offset=".92" stop-color="#4a4a4a"/><stop offset="1" stop-color="#5c5c5c"/></radialGradient>
<radialGradient id="darkhl" cx=".5" cy=".5" r=".5"><stop offset="0" stop-color="#8a8a8a" stop-opacity=".75"/><stop offset="1" stop-color="#8a8a8a" stop-opacity="0"/></radialGradient>
<radialGradient id="white" cx=".62" cy=".3" r=".85"><stop offset="0" stop-color="#dfdfdf"/><stop offset=".5" stop-color="#d0d0d0"/><stop offset=".85" stop-color="#b4b4b4"/><stop offset="1" stop-color="#a4a4a4"/></radialGradient>
<radialGradient id="bottlew" cx=".5" cy=".45" r=".6"><stop offset="0" stop-color="#d6d6d4"/><stop offset=".7" stop-color="#cfcecb"/><stop offset="1" stop-color="#bcb9b2"/></radialGradient>
<radialGradient id="hess" cx=".55" cy=".35" r=".75"><stop offset="0" stop-color="#bca072"/><stop offset=".6" stop-color="#a88e65"/><stop offset=".9" stop-color="#8b7a5e"/><stop offset="1" stop-color="#8a8378"/></radialGradient>
<radialGradient id="rock3" cx=".5" cy=".42" r=".62"><stop offset="0" stop-color="#96825f"/><stop offset=".6" stop-color="#8a795c"/><stop offset=".88" stop-color="#7d7466"/><stop offset="1" stop-color="#8c8b88"/></radialGradient>
<radialGradient id="rock1" cx=".5" cy=".45" r=".62"><stop offset="0" stop-color="#8a7c66"/><stop offset=".6" stop-color="#7f7566"/><stop offset=".88" stop-color="#7a766f"/><stop offset="1" stop-color="#8c8b88"/></radialGradient>
<filter id="sb"><feGaussianBlur stdDeviation="2.2"/></filter><filter id="sb1"><feGaussianBlur stdDeviation=".8"/></filter>
</defs>
<circle cx="1401.2" cy="829.8" r="28.6" fill="url(#velour)"/><circle cx="1401.2" cy="829.8" r="28.3" fill="none" stroke="#b08a5a" stroke-width=".8"/>
<circle cx="1477" cy="829.8" r="28.6" fill="url(#dark)"/><ellipse cx="1481" cy="812.8" rx="10" ry="6" fill="url(#darkhl)"/>
<circle cx="1553" cy="829.8" r="28.6" fill="url(#dark)"/><ellipse cx="1557" cy="812.8" rx="10" ry="6" fill="url(#darkhl)"/>
<circle cx="1629" cy="829.8" r="28.6" fill="url(#dark)"/><ellipse cx="1633" cy="812.8" rx="10" ry="6" fill="url(#darkhl)"/>
<circle cx="1705" cy="829.8" r="28.6" fill="url(#rock3)"/><ellipse cx="1707" cy="810.8" rx="9" ry="4" fill="#c8c4bc" opacity=".55" filter="url(#sb)"/>
<circle cx="1781" cy="829.8" r="28.6" fill="url(#rock1)"/><ellipse cx="1783" cy="810.8" rx="9" ry="4" fill="#c8c4bc" opacity=".55" filter="url(#sb)"/>
<circle cx="1857" cy="829.8" r="28.6" fill="url(#white)"/>
<circle cx="1401.2" cy="914.1" r="28.6" fill="url(#white)"/>
<circle cx="1477" cy="914.1" r="28.6" fill="url(#white)"/>
<circle cx="1553" cy="914.1" r="28.6" fill="url(#hess)"/><path d="M1550 894.1q3 -4 7 -2q2 2 4 4q2 3 0 4q-3 0 -4 -3q-4 0 -7 -3z" fill="#f4f4f4" filter="url(#sb1)"/>
<circle cx="1629" cy="914.1" r="28.6" fill="url(#white)"/>
<circle cx="1705" cy="914.1" r="28.6" fill="url(#bottlew)"/><ellipse cx="1693" cy="936.1" rx="6" ry="3" fill="#fff" opacity=".7" filter="url(#sb1)"/>
</svg>
<div class="t c" style="left:1351px;width:100px;top:866px">velour_velvet</div>
<div class="t c" style="left:1427px;width:100px;top:866px">Soft Textur...</div>
<div class="t c" style="left:1503px;width:100px;top:866px">Soft Textur...</div>
<div class="t c" style="left:1579px;width:100px;top:866px">Soft Rough...</div>
<div class="t c" style="left:1655px;width:100px;top:866px">rock_3</div>
<div class="t c" style="left:1731px;width:100px;top:866px">rock_01</div>
<div class="t c" style="left:1807px;width:100px;top:866px">Pump_Tube</div>
<div class="t c" style="left:1351px;width:100px;top:950px">Liquid</div>
<div class="t c" style="left:1427px;width:100px;top:950px">Label</div>
<div class="t c" style="left:1503px;width:100px;top:950px">hessian_230</div>
<div class="t c" style="left:1579px;width:100px;top:950px">Folded_Thr...</div>
<div class="t c" style="left:1655px;width:100px;top:950px">Bottle</div>
<!--SPHERESEND-->
<!-- list toolbar -->
<svg class="abs" style="left:1364px;top:975px" width="36" height="16" viewBox="0 0 36 16"><g fill="#f0f0f0"><rect x="1" y="2" width="12.5" height="2.6"/><rect x="1" y="6.7" width="12.5" height="2.6"/><rect x="1" y="11.4" width="12.5" height="2.6"/></g><g fill="#3b82e6"><rect x="20" y="2" width="3.2" height="3.2"/><rect x="24.4" y="2" width="3.2" height="3.2"/><rect x="28.8" y="2" width="3.2" height="3.2"/><rect x="20" y="6.4" width="3.2" height="3.2"/><rect x="24.4" y="6.4" width="3.2" height="3.2"/><rect x="28.8" y="6.4" width="3.2" height="3.2"/><rect x="20" y="10.800" width="3.2" height="3.2"/><rect x="24.4" y="10.8" width="3.2" height="3.2"/><rect x="28.8" y="10.8" width="3.2" height="3.2"/></g></svg>
<svg class="abs" style="left:1411px;top:975px" width="16" height="16" viewBox="0 0 16 16" fill="none" stroke="#e8e8e8"><circle cx="9" cy="6.5" r="4" stroke-width="1.8"/><path d="M6 9.500L2 13.500" stroke-width="2.2" stroke-linecap="round"/><path d="M7 6.5H11" stroke-width="1.4"/></svg>
<div class="abs" style="left:1432px;top:982px;width:180px;height:2px;background:#5a5a5a"></div>
<div class="abs" style="left:1612px;top:982px;width:236px;height:2px;background:#1e1e1e"></div>
<div class="abs" style="left:1605px;top:977px;width:12px;height:12px;border-radius:6px;background:#9a9a9a"></div>
<svg class="abs" style="left:1851px;top:975px" width="16" height="16" viewBox="0 0 16 16" fill="none" stroke="#e8e8e8"><circle cx="9" cy="6.5" r="4" stroke-width="1.8"/><path d="M6 9.500L2 13.500" stroke-width="2.2" stroke-linecap="round"/><path d="M7 6.5H11M9 4.5V8.5" stroke-width="1.4"/></svg>
<svg class="abs" style="left:1879px;top:974px" width="20" height="18" viewBox="0 0 20 18" fill="none" stroke="#e8e8e8" stroke-width="1.5"><ellipse cx="9" cy="4" rx="7" ry="2.300"/><path d="M2 4.500L7.500 10.500V15L10.500 16V10.500L16 4.500"/><path d="M11.500 10H17.500L14.500 14Z" fill="#e8e8e8" stroke="none"/></svg>
<!-- BOTTOM -->
<div class="abs" style="left:1919px;top:0;width:1px;height:1080px;background:#3c3c3c"></div>
<div class="abs" style="left:0;top:1079px;width:1920px;height:1px;background:#3a3a3a"></div>
<svg class="abs" style="left:5px;top:1031px" width="8" height="20" viewBox="0 0 8 20" fill="#5a5a5a"><g id="dd"><rect x="1" y="1" width="1.6" height="1.6"/><rect x="4" y="1" width="1.6" height="1.6"/></g><use href="#dd" y="3"/><use href="#dd" y="6"/><use href="#dd" y="9"/><use href="#dd" y="12"/><use href="#dd" y="15"/></svg>
<svg class="abs" style="left:40px;top:1011px" width="28" height="24" viewBox="0 0 28 24" fill="none" stroke="#d8d8d8" stroke-width="1.3"><path d="M7.500 19.500H6Q1.500 19 1.800 14.800Q2.200 11.500 5.500 11Q5.500 7 9 6Q10.500 2 15 2Q19.500 2.500 20.500 6.500Q25.500 7 26 12Q26 17 22 19H20.500"/><path d="M9 14Q7 10 11 8.500Q12.500 5.500 16 7Q19.500 6.500 19.500 10Q22 12 19.500 14.500" stroke-dasharray="3.500 1.800"/><path d="M9.500 15.500Q10 19.500 14 19.500Q18.500 19.500 19 15.500" stroke-dasharray="3.500 1.800"/></svg>
<div class="t c" style="left:4px;width:100px;top:1039px;line-height:16px">Cloud
Library</div>
<!-- center tools -->
<div class="abs" style="left:723px;top:1006px;width:80px;height:70px;background:#161616;border-bottom:3px solid #3b7fe0"></div>
<div class="abs" style="left:804px;top:1006px;width:80px;height:70px;background:#161616;border-bottom:3px solid #3b7fe0"></div>
<div class="abs" style="left:1755px;top:1006px;width:80px;height:70px;background:#161616;border-bottom:3px solid #3b7fe0"></div>
<div class="t c" style="left:632px;width:100px;top:1047px">Import</div>
<div class="t c" style="left:713px;width:100px;top:1047px;color:#4a8be8">Library</div>
<div class="t c" style="left:794px;width:100px;top:1047px;color:#4a8be8">Project</div>
<div class="t c" style="left:875px;width:100px;top:1047px">Animation</div>
<div class="t c" style="left:956px;width:100px;top:1047px">Export Mode</div>
<div class="t c" style="left:1037px;width:100px;top:1047px">KeyShotXR</div>
<div class="t c" style="left:1118px;width:100px;top:1047px">VR</div>
<div class="t c" style="left:1199px;width:100px;top:1047px">Render</div>
<div class="t c" style="left:1745px;width:100px;top:1047px;color:#4a8be8">AI Shots</div>
<div class="t c" style="left:1836px;width:80px;top:1047px">Screenshot</div>
<!--BICONS-->
<svg class="abs" style="left:660px;top:1006px" width="620" height="36" viewBox="660 1006 620 36" fill="none" stroke="#d9d9d9" stroke-width="1.700" stroke-linecap="round" stroke-linejoin="round">
<!-- import -->
<path d="M686.500 1026.500A8.700 8.700 0 1 0 681.500 1030"/><path d="M679.200 1011.500V1019" stroke-width="2.200"/><path d="M675.500 1016.500H682.900L679.200 1021.500Z" fill="#d9d9d9" stroke-width=".600"/>
<circle cx="688" cy="1029.200" r="5.300" fill="#2b2b2b"/><path d="M688 1026.300V1032.100M685.100 1029.200H690.900" stroke-width="1.500"/>
<!-- library -->
<g stroke="#3b82e6" stroke-width="1.800"><path d="M762.800 1016.500Q757.500 1012.800 752.500 1013.500L751.200 1031Q757.500 1030 762.800 1032.300Q768 1030 774.500 1031L773.200 1013.500Q768 1012.800 762.800 1016.500ZM762.800 1016.500V1032"/></g>
<!-- project -->
<g stroke="#3b82e6"><rect x="833" y="1013.200" width="21.300" height="19.300" rx="2.200" stroke-width="1.900"/><path d="M837 1019H850.300M837 1023H850.300M837 1027H850.300" stroke-width="1.600"/><path d="M855.300 1016V1030" stroke-width="1.200" stroke-dasharray="1.500 1.800"/></g>
<!-- animation -->
<path d="M917.500 1015.500A10.800 10.800 0 1 1 914.700 1026.500" stroke-width="2"/><path d="M913.800 1012.800L914.300 1019.700L920.800 1018.200Z" fill="#d9d9d9" stroke-width=".800"/><path d="M921.700 1018.500V1027.500L929.700 1023Z" fill="#d9d9d9" stroke-width=".600"/>
<!-- export -->
<path d="M1003 1013.200H998Q994.500 1013.200 994.500 1016.700V1029Q994.500 1032.800 998 1032.800H1011.500Q1015 1032.800 1015 1029V1028" stroke-width="2"/><path d="M1001.500 1027.500Q1001.500 1020.300 1010 1020.300V1024L1017.800 1017.700L1010 1011.800V1015.800Q1001.500 1016.500 1001.500 1027.500Z" fill="#d9d9d9" stroke-width=".800"/>
<!-- keyshotxr -->
<path d="M1086.800 1011.300L1094.800 1014.800V1023.500L1086.800 1027.500L1078.800 1023.500V1014.800ZM1078.800 1014.800L1086.800 1018.300L1094.800 1014.800M1086.800 1018.300V1027.500" stroke-width="1.500"/><path d="M1077.800 1020.500Q1073.800 1025 1077 1030Q1079 1032.500 1082 1033.200" stroke-width="2"/><path d="M1096 1020.500Q1100 1025.500 1096.500 1030Q1094.500 1032.500 1091 1033.300" stroke-width="2"/><path d="M1080.500 1030L1085 1033.800L1080 1035.500Z" fill="#d9d9d9" stroke-width=".700"/>
<!-- vr -->
<ellipse cx="1167.800" cy="1022.500" rx="8.800" ry="11.800" stroke-width="1.500"/><rect x="1157" y="1018.200" width="21.600" height="8.800" rx="2.500" fill="#d9d9d9" stroke-width=".800"/><path d="M1170.300 1025.500L1172.300 1019.800M1173.300 1025.500L1175.300 1019.800" stroke="#2b2b2b" stroke-width="1"/>
<!-- render -->
<path d="M1238 1015.300H1243.800L1245 1013.300H1250.200L1251.500 1015.300H1257V1031.800H1238Z" stroke-width="1.500"/><circle cx="1247.200" cy="1022.500" r="4.600" stroke-width="1.500"/><circle cx="1254.200" cy="1029" r="5.500" fill="#2b2b2b" stroke-width="1.400"/><path d="M1251.600 1029L1253.600 1031.200L1257 1027" stroke-width="1.500"/>
</svg>
<svg class="abs" style="left:1775px;top:1008px" width="120" height="32" viewBox="1775 1008 120 32">
<rect x="1782.400" y="1013.800" width="26.200" height="22" rx="2.800" fill="#3b82e6"/>
<path d="M1785.200 1016.300H1806V1026L1803 1022.500L1799.500 1027L1793.400 1019.500L1785.200 1030Z" fill="#161616"/>
<path d="M1798.300 1022.800L1806 1033.600H1803.200L1796.800 1024.600Z" fill="#161616"/>
<circle cx="1789.300" cy="1020.300" r="2.600" fill="#3b82e6"/>
<path d="M1797.800 1010.200L1799.700 1014.500L1803.900 1016.400L1799.700 1018.300L1797.800 1022.600L1795.900 1018.300L1791.700 1016.400L1795.900 1014.500Z" fill="#3b82e6" stroke="#161616" stroke-width="1"/>
<path d="M1804.100 1018.800L1805.200 1021.100L1807.500 1022.200L1805.200 1023.300L1804.100 1025.600L1803 1023.300L1800.700 1022.200L1803 1021.100Z" fill="#3b82e6" stroke="#161616" stroke-width=".800"/>
<g fill="none" stroke="#e2e2e2" stroke-width="1.700"><path d="M1864.700 1015V1011.500H1868.500M1871.300 1011.500H1875M1877.800 1011.500H1881.500V1015M1881.500 1017.800V1021M1864.700 1017.800V1021.500M1864.700 1024.300V1028.800H1868.500M1871.300 1028.800H1873"/><circle cx="1881" cy="1028.400" r="5" stroke-width="1.400"/><path d="M1881 1021.500V1035.300M1874.100 1028.400H1887.900" stroke-width="1.300"/></g>
</svg>
<!--BICONSEND-->
</body>
</html>
